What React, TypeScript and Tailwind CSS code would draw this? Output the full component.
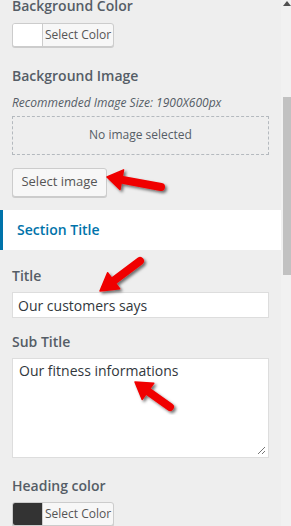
import React from "react";

type Pt = [number, number];

function Arrow({ tip, tail, L = 16, h = 10, w = 8 }: { tip: Pt; tail: Pt; L?: number; h?: number; w?: number }) {
  const dx = tip[0] - tail[0];
  const dy = tip[1] - tail[1];
  const len = Math.hypot(dx, dy);
  const ux = dx / len;
  const uy = dy / len;
  const nx = -uy;
  const ny = ux;
  const bx = tip[0] - ux * L;
  const by = tip[1] - uy * L;
  const pts = [
    [tip[0], tip[1]],
    [bx + nx * h, by + ny * h],
    [bx - nx * h, by - ny * h],
  ]
    .map((p) => p.join(","))
    .join(" ");
  return (
    <g filter="url(#shadow)">
      <line x1={tail[0]} y1={tail[1]} x2={bx + ux * 2} y2={by + uy * 2} stroke="#f00000" strokeWidth={w} strokeLinecap="round" />
      <polygon points={pts} fill="#f00000" stroke="#f00000" strokeWidth={1.5} strokeLinejoin="round" />
    </g>
  );
}

function ColorButton({ swatch }: { swatch: string }) {
  return (
    <div className="flex h-[24px] w-[102px] rounded-[3px] border border-[#cccccc] bg-[#f7f7f7] shadow-[0_1px_0_#cccccc] overflow-hidden">
      <div className="w-[30px] h-full border-r border-[#cccccc]" style={{ background: swatch }} />
      <div className="flex-1 flex items-center justify-center text-[12px] text-[#555555] leading-none">Select Color</div>
    </div>
  );
}

export default function App() {
  const font = { fontFamily: '"Open Sans", "Noto Sans", sans-serif' };
  return (
    <div className="relative w-[291px] h-[526px] overflow-hidden bg-[#eeeeee] flex" style={font}>
      <div className="w-[281px] flex flex-col">
        <div className="pl-[12px] -mt-[4px] h-[20px] leading-[20px] text-[14px] font-semibold text-[#555d66]">Background Color</div>
        <div className="pl-[12px] mt-[7px]">
          <ColorButton swatch="#ffffff" />
        </div>
        <div className="pl-[12px] mt-[19px] h-[20px] leading-[20px] text-[14px] font-semibold text-[#555d66]">Background Image</div>
        <div className="pl-[12px] mt-[9px] h-[16px] leading-[16px] text-[12px] italic text-[#555d66]">Recommended Image Size: 1900X600px</div>
        <div className="ml-[12px] mt-[5px] h-[39px] w-[257px] border border-dashed border-[#b4b9be] flex items-center justify-center text-[12px] text-[#555d66]">
          No image selected
        </div>
        <div className="pl-[12px] mt-[13px]">
          <div className="h-[29px] w-[95px] rounded-[3px] border border-[#cccccc] bg-[#f7f7f7] shadow-[0_1px_0_#cccccc] flex items-center justify-center text-[13px] text-[#555555]">
            Select image
          </div>
        </div>
        <div className="mt-[13px] h-[41px] bg-white border-l-[3px] border-[#0073aa] flex items-center pl-[14px] text-[14px] font-semibold text-[#0073aa]">
          Section Title
        </div>
        <div className="pl-[12px] mt-[16px] h-[20px] leading-[20px] text-[14px] font-semibold text-[#555d66]">Title</div>
        <div className="ml-[12px] mt-[6px] h-[26px] w-[257px] bg-white border border-[#dddddd] flex items-center pl-[5px] text-[14px] text-[#32373c]">
          Our customers says
        </div>
        <div className="pl-[12px] mt-[14px] h-[20px] leading-[20px] text-[14px] font-semibold text-[#555d66]">Sub Title</div>
        <div className="relative ml-[12px] mt-[6px] h-[101px] w-[257px] bg-white border border-[#dddddd] pl-[6px] pt-[2px] text-[14px] leading-[20px] text-[#32373c]">
          Our fitness informations
          <svg className="absolute right-[2px] bottom-[2px]" width="9" height="9" viewBox="0 0 9 9">
            <line x1="1" y1="8" x2="8" y2="1" stroke="#777" strokeWidth="1" />
            <line x1="5" y1="8" x2="8" y2="5" stroke="#777" strokeWidth="1" />
          </svg>
        </div>
        <div className="pl-[12px] mt-[18px] h-[20px] leading-[20px] text-[14px] font-semibold text-[#555d66]">Heading color</div>
        <div className="pl-[12px] mt-[6px]">
          <ColorButton swatch="#333333" />
        </div>
      </div>
      <div className="w-[10px] h-full bg-[#f1f1f1] flex flex-col items-end">
        <svg width="8" height="6" viewBox="0 0 8 6" className="mt-[1px]">
          <polygon points="4,0 8,5 0,5" fill="#505050" />
        </svg>
        <div className="mt-[90px] w-[8px] h-[178px] bg-[#c1c1c1]" />
      </div>
      <svg className="absolute left-0 top-0 pointer-events-none" width="291" height="526" viewBox="0 0 291 526">
        <defs>
          <filter id="shadow" x="-30%" y="-30%" width="160%" height="160%">
            <feDropShadow dx="2" dy="2" stdDeviation="1.5" floodColor="#000" floodOpacity="0.55" />
          </filter>
        </defs>
        <Arrow tip={[107, 177]} tail={[161, 187]} L={15} h={10} w={8} />
        <Arrow tip={[100, 291]} tail={[140, 261]} L={17} h={10} w={8} />
        <Arrow tip={[135, 382]} tail={[170, 407]} L={16} h={10} w={8} />
      </svg>
    </div>
  );
}
